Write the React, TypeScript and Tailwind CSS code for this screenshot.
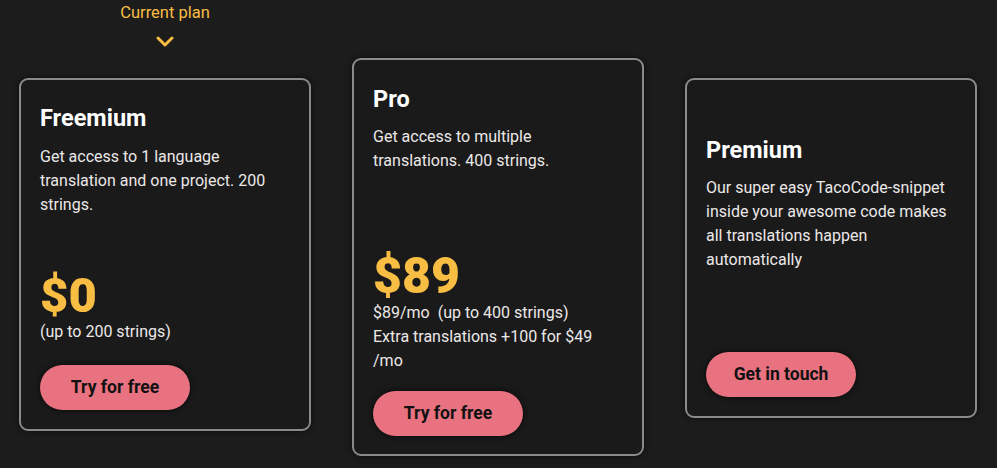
import React from "react";

const AMBER = "text-[#f8bd43]";

function Card({ children, className = "" }: { children: React.ReactNode; className?: string }) {
  return (
    <div className={`w-[292px] rounded-[9px] border-2 border-[#8a8a8a] bg-[#1a1a1a] px-[19px] shadow-[0_0_6px_rgba(0,0,0,0.6)] ${className}`}>
      {children}
    </div>
  );
}

function Button({ label }: { label: string }) {
  return (
    <button className="h-[45px] w-[150px] rounded-full bg-[#e8727f] text-[17.5px] font-bold text-[#111] shadow-[0_0_6px_rgba(0,0,0,0.7)]">
      {label}
    </button>
  );
}

export default function App() {
  return (
    <div
      className="h-[468px] w-[997px] overflow-hidden bg-[#1c1c1c] text-[#ece8e8]"
      style={{ fontFamily: "Roboto, 'Noto Sans', sans-serif" }}
    >
      <div className="flex items-start gap-[41px] px-[19px]">
        {/* Freemium */}
        <div className="flex flex-col">
          <div className="flex h-[78px] flex-col items-center">
            <div className={`mt-[2px] text-[16.5px] leading-[22px] ${AMBER}`}>Current plan</div>
            <svg className="mt-[12px]" width="18" height="11" viewBox="0 0 18 11" fill="none">
              <path d="M2 2l7 7 7-7" stroke="#f8bd43" strokeWidth="3" strokeLinecap="round" strokeLinejoin="round" />
            </svg>
          </div>
          <Card className="pt-[24px] pb-[19px]">
            <div className="h-[168px]">
              <h2 className="text-[23.5px] font-bold leading-[28px] text-white">Freemium</h2>
              <p className="mt-[13px] text-[16px] leading-[24px]">
                Get access to 1 language
                <br />
                translation and one project. 200
                <br />
                strings.
              </p>
            </div>
            <div className={`text-[49px] font-black leading-[48px] ${AMBER}`}>$0</div>
            <div className="text-[16px] leading-[24px]">(up to 200 strings)</div>
            <div className="mt-[21px]">
              <Button label="Try for free" />
            </div>
          </Card>
        </div>

        {/* Pro */}
        <div className="pt-[58px]">
          <Card className="pt-[25px] pb-[18px]">
            <div className="h-[166px]">
              <h2 className="text-[23.5px] font-bold leading-[28px] text-white">Pro</h2>
              <p className="mt-[12px] text-[16px] leading-[24px]">
                Get access to multiple
                <br />
                translations. 400 strings.
              </p>
            </div>
            <div className={`text-[50px] font-black leading-[50px] ${AMBER}`}>$89</div>
            <div className="text-[16px] leading-[24px]">
              $89/mo&nbsp; (up to 400 strings)
              <br />
              Extra translations +100 for $49
              <br />
              /mo
            </div>
            <div className="mt-[18px]">
              <Button label="Try for free" />
            </div>
          </Card>
        </div>

        {/* Premium */}
        <div className="pt-[78px]">
          <Card className="pt-[56px] pb-[19px]">
            <h2 className="text-[23.5px] font-bold leading-[28px] text-white">Premium</h2>
            <p className="mt-[12px] text-[16px] leading-[24px]">
              Our super easy TacoCode-snippet
              <br />
              inside your awesome code makes
              <br />
              all translations happen
              <br />
              automatically
            </p>
            <div className="mt-[80px]">
              <Button label="Get in touch" />
            </div>
          </Card>
        </div>
      </div>
    </div>
  );
}
